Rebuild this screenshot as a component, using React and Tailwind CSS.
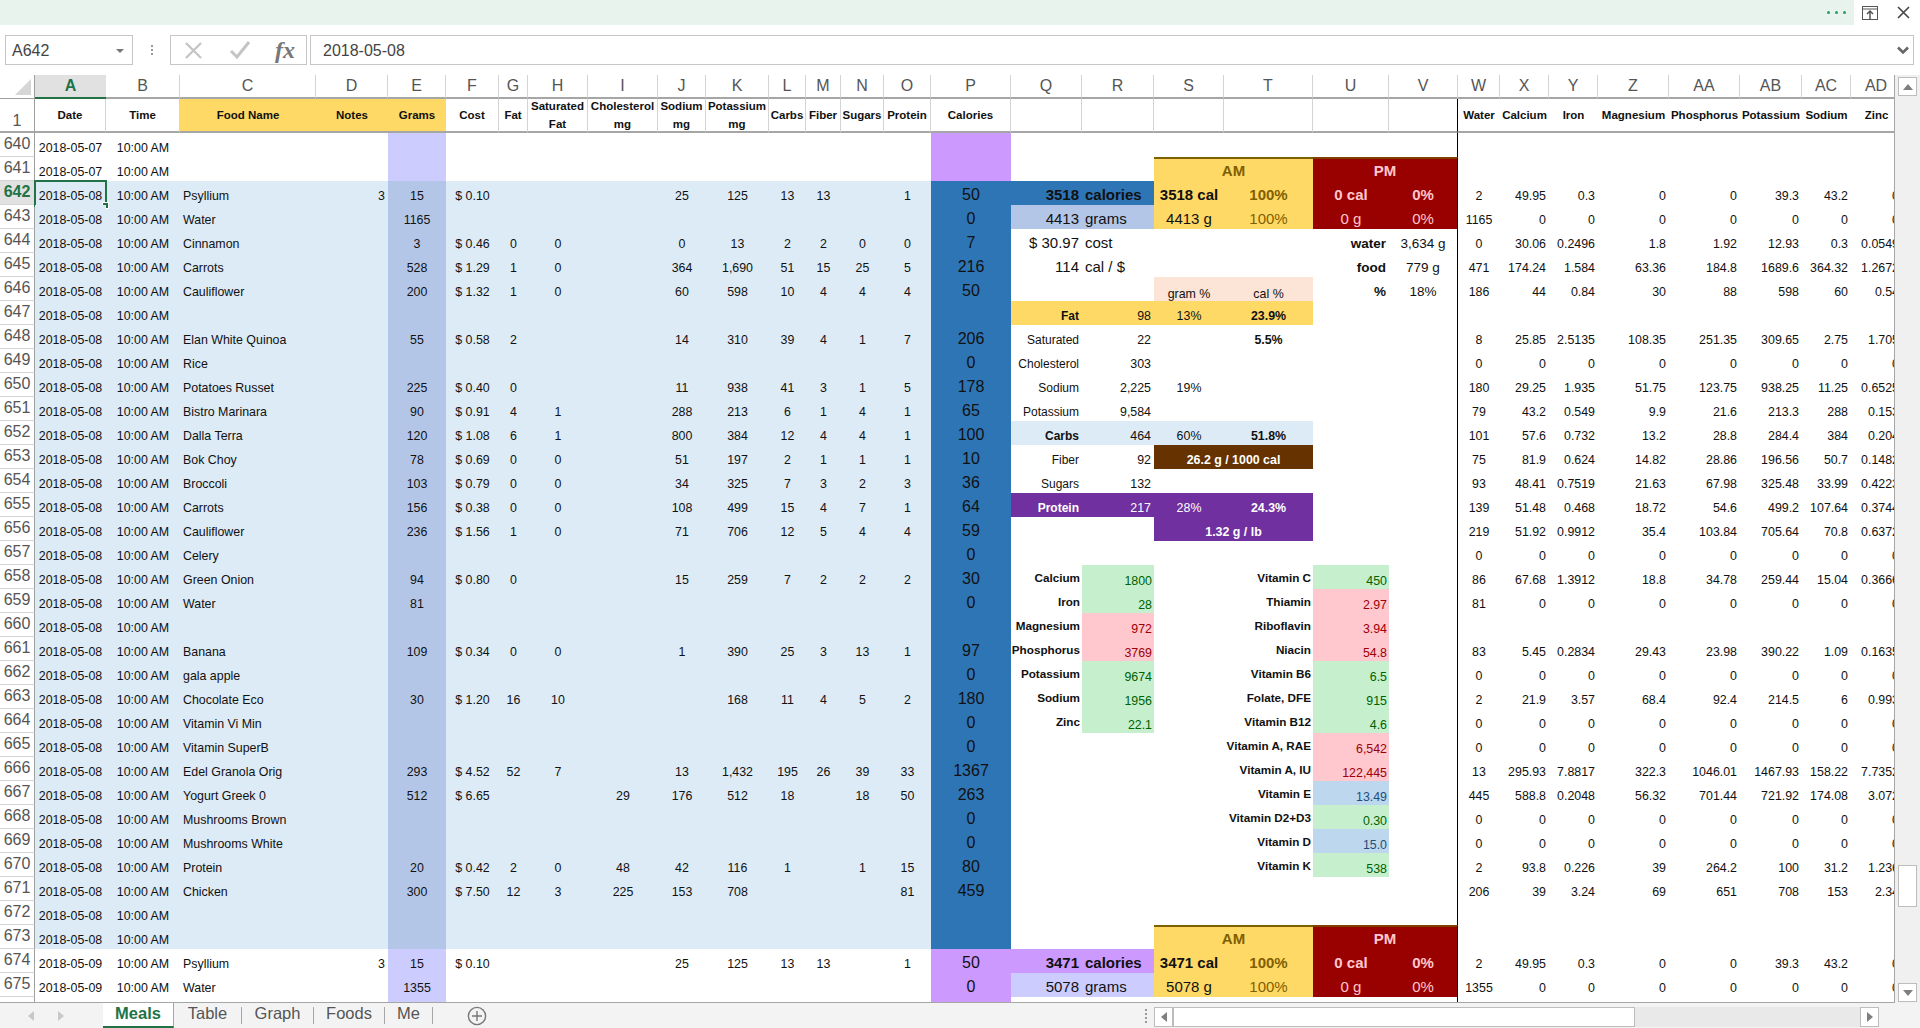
import React from "react";

const Z = [0, 0, 0, 0, 0, 0, 0, 0];
const D7 = "2018-05-07", D8 = "2018-05-08", D9 = "2018-05-09";
// num,date,name,notes,grams,cost,fat,sat,chol,sod,pot,carbs,fiber,sug,prot,cal,right
const rows = [
  [640, D7],
  [641, D7],
  [642, D8, "Psyllium", "3", "15", "$ 0.10", "", "", "", "25", "125", "13", "13", "", "1", "50", [2, 49.95, 0.3, 0, 0, 39.3, 43.2, 0]],
  [643, D8, "Water", "", "1165", "", "", "", "", "", "", "", "", "", "", "0", [1165, 0, 0, 0, 0, 0, 0, 0]],
  [644, D8, "Cinnamon", "", "3", "$ 0.46", "0", "0", "", "0", "13", "2", "2", "0", "0", "7", [0, 30.06, 0.2496, 1.8, 1.92, 12.93, 0.3, 0.0549]],
  [645, D8, "Carrots", "", "528", "$ 1.29", "1", "0", "", "364", "1,690", "51", "15", "25", "5", "216", [471, 174.24, 1.584, 63.36, 184.8, 1689.6, 364.32, 1.2672]],
  [646, D8, "Cauliflower", "", "200", "$ 1.32", "1", "0", "", "60", "598", "10", "4", "4", "4", "50", [186, 44, 0.84, 30, 88, 598, 60, 0.54]],
  [647, D8],
  [648, D8, "Elan White Quinoa", "", "55", "$ 0.58", "2", "", "", "14", "310", "39", "4", "1", "7", "206", [8, 25.85, 2.5135, 108.35, 251.35, 309.65, 2.75, 1.705]],
  [649, D8, "Rice", "", "", "", "", "", "", "", "", "", "", "", "", "0", Z],
  [650, D8, "Potatoes Russet", "", "225", "$ 0.40", "0", "", "", "11", "938", "41", "3", "1", "5", "178", [180, 29.25, 1.935, 51.75, 123.75, 938.25, 11.25, 0.6525]],
  [651, D8, "Bistro Marinara", "", "90", "$ 0.91", "4", "1", "", "288", "213", "6", "1", "4", "1", "65", [79, 43.2, 0.549, 9.9, 21.6, 213.3, 288, 0.153]],
  [652, D8, "Dalla Terra", "", "120", "$ 1.08", "6", "1", "", "800", "384", "12", "4", "4", "1", "100", [101, 57.6, 0.732, 13.2, 28.8, 284.4, 384, 0.204]],
  [653, D8, "Bok Choy", "", "78", "$ 0.69", "0", "0", "", "51", "197", "2", "1", "1", "1", "10", [75, 81.9, 0.624, 14.82, 28.86, 196.56, 50.7, 0.1482]],
  [654, D8, "Broccoli", "", "103", "$ 0.79", "0", "0", "", "34", "325", "7", "3", "2", "3", "36", [93, 48.41, 0.7519, 21.63, 67.98, 325.48, 33.99, 0.4223]],
  [655, D8, "Carrots", "", "156", "$ 0.38", "0", "0", "", "108", "499", "15", "4", "7", "1", "64", [139, 51.48, 0.468, 18.72, 54.6, 499.2, 107.64, 0.3744]],
  [656, D8, "Cauliflower", "", "236", "$ 1.56", "1", "0", "", "71", "706", "12", "5", "4", "4", "59", [219, 51.92, 0.9912, 35.4, 103.84, 705.64, 70.8, 0.6372]],
  [657, D8, "Celery", "", "", "", "", "", "", "", "", "", "", "", "", "0", Z],
  [658, D8, "Green Onion", "", "94", "$ 0.80", "0", "", "", "15", "259", "7", "2", "2", "2", "30", [86, 67.68, 1.3912, 18.8, 34.78, 259.44, 15.04, 0.3666]],
  [659, D8, "Water", "", "81", "", "", "", "", "", "", "", "", "", "", "0", [81, 0, 0, 0, 0, 0, 0, 0]],
  [660, D8],
  [661, D8, "Banana", "", "109", "$ 0.34", "0", "0", "", "1", "390", "25", "3", "13", "1", "97", [83, 5.45, 0.2834, 29.43, 23.98, 390.22, 1.09, 0.1635]],
  [662, D8, "gala apple", "", "", "", "", "", "", "", "", "", "", "", "", "0", Z],
  [663, D8, "Chocolate Eco", "", "30", "$ 1.20", "16", "10", "", "", "168", "11", "4", "5", "2", "180", [2, 21.9, 3.57, 68.4, 92.4, 214.5, 6, 0.993]],
  [664, D8, "Vitamin Vi Min", "", "", "", "", "", "", "", "", "", "", "", "", "0", Z],
  [665, D8, "Vitamin SuperB", "", "", "", "", "", "", "", "", "", "", "", "", "0", Z],
  [666, D8, "Edel Granola Orig", "", "293", "$ 4.52", "52", "7", "", "13", "1,432", "195", "26", "39", "33", "1367", [13, 295.93, 7.8817, 322.3, 1046.01, 1467.93, 158.22, 7.7352]],
  [667, D8, "Yogurt Greek 0", "", "512", "$ 6.65", "", "", "29", "176", "512", "18", "", "18", "50", "263", [445, 588.8, 0.2048, 56.32, 701.44, 721.92, 174.08, 3.072]],
  [668, D8, "Mushrooms Brown", "", "", "", "", "", "", "", "", "", "", "", "", "0", Z],
  [669, D8, "Mushrooms White", "", "", "", "", "", "", "", "", "", "", "", "", "0", Z],
  [670, D8, "Protein", "", "20", "$ 0.42", "2", "0", "48", "42", "116", "1", "", "1", "15", "80", [2, 93.8, 0.226, 39, 264.2, 100, 31.2, 1.236]],
  [671, D8, "Chicken", "", "300", "$ 7.50", "12", "3", "225", "153", "708", "", "", "", "81", "459", [206, 39, 3.24, 69, 651, 708, 153, 2.34]],
  [672, D8],
  [673, D8],
  [674, D9, "Psyllium", "3", "15", "$ 0.10", "", "", "", "25", "125", "13", "13", "", "1", "50", [2, 49.95, 0.3, 0, 0, 39.3, 43.2, 0]],
  [675, D9, "Water", "", "1355", "", "", "", "", "", "", "", "", "", "", "0", [1355, 0, 0, 0, 0, 0, 0, 0]],
  [676],
];

const cols = ["A", "B", "C", "D", "E", "F", "G", "H", "I", "J", "K", "L", "M", "N", "O", "P", "Q", "R", "S", "T", "U", "V", "W", "X", "Y", "Z", "AA", "AB", "AC", "AD"];

const base = "flex min-w-0 overflow-hidden whitespace-nowrap items-end pb-[2px] text-[12.4px] leading-[14px] text-[#111]";
const ctr = "justify-center";
const rt = "justify-end pr-[3px]";
const lf = "justify-start pl-[3px]";
const big = "items-center !pb-[1px] !text-[15px] !leading-[18px]";
const VR = "border-r border-black";

const Cell = ({ c = "", span, children }) => (
  <div className={`${base} ${c} ${span ? "col-span-2" : ""}`}>{children}</div>
);

const metrics = {
  647: ["Fat", "98", "13%", "23.9%", "bg-[#ffd966]", "font-bold", ""],
  648: ["Saturated", "22", "", "5.5%", "", "", ""],
  649: ["Cholesterol", "303", "", "", "", "", ""],
  650: ["Sodium", "2,225", "19%", "", "", "", ""],
  651: ["Potassium", "9,584", "", "", "", "", ""],
  652: ["Carbs", "464", "60%", "51.8%", "bg-[#ddebf7]", "font-bold", ""],
  654: ["Sugars", "132", "", "", "", "", ""],
};

const GR = "bg-[#c6efce] !text-[#006100]";
const RD = "bg-[#ffc7ce] !text-[#9c0006]";
const BL = "bg-[#bdd7ee] !text-[#1f4e78]";
const minerals = {
  658: ["Calcium", "1800", GR], 659: ["Iron", "28", GR], 660: ["Magnesium", "972", RD], 661: ["Phosphorus", "3769", RD],
  662: ["Potassium", "9674", GR], 663: ["Sodium", "1956", GR], 664: ["Zinc", "22.1", GR],
};
const vitamins = {
  658: ["Vitamin C", "450", GR], 659: ["Thiamin", "2.97", RD], 660: ["Riboflavin", "3.94", RD], 661: ["Niacin", "54.8", RD],
  662: ["Vitamin B6", "6.5", GR], 663: ["Folate, DFE", "915", GR], 664: ["Vitamin B12", "4.6", GR], 665: ["Vitamin A, RAE", "6,542", RD],
  666: ["Vitamin A, IU", "122,445", RD], 667: ["Vitamin E", "13.49", BL], 668: ["Vitamin D2+D3", "0.30", GR], 669: ["Vitamin D", "15.0", BL], 670: ["Vitamin K", "538", GR],
};

function amPm() {
  return [
    <Cell key="q" />,
    <Cell key="r" />,
    <Cell key="s" span c={`${ctr} ${big} bg-[#ffd966] border-t-2 border-[#7f6000] font-bold !text-[#7f6000]`}>AM</Cell>,
    <Cell key="u" span c={`${ctr} ${big} bg-[#990000] border-t-2 border-t-[#7f3f00] font-bold !text-[#ffc7ce] ${VR}`}>PM</Cell>,
  ];
}

function Summary({ cal, g, calBg, gBg }) {
  return {
    top: [
      <Cell key="q" c={`${rt} ${big} ${calBg} font-bold`}>{cal}</Cell>,
      <Cell key="r" c={`${lf} ${big} ${calBg} font-bold`}>calories</Cell>,
      <Cell key="s" c={`${ctr} ${big} bg-[#ffd966] font-bold`}>{cal} cal</Cell>,
      <Cell key="t" c={`${ctr} ${big} bg-[#ffd966] font-bold !text-[#7f6000]`}>100%</Cell>,
      <Cell key="u" c={`${ctr} ${big} bg-[#990000] font-bold !text-[#ffc7ce]`}>0 cal</Cell>,
      <Cell key="v" c={`${ctr} ${big} bg-[#990000] font-bold !text-[#ffc7ce] ${VR}`}>0%</Cell>,
    ],
    bot: [
      <Cell key="q" c={`${rt} ${big} ${gBg}`}>{g}</Cell>,
      <Cell key="r" c={`${lf} ${big} ${gBg}`}>grams</Cell>,
      <Cell key="s" c={`${ctr} ${big} bg-[#ffd966]`}>{g} g</Cell>,
      <Cell key="t" c={`${ctr} ${big} bg-[#ffd966] !text-[#7f6000]`}>100%</Cell>,
      <Cell key="u" c={`${ctr} ${big} bg-[#990000] !text-[#ffc7ce]`}>0 g</Cell>,
      <Cell key="v" c={`${ctr} ${big} bg-[#990000] !text-[#ffc7ce] ${VR}`}>0%</Cell>,
    ],
  };
}

function Panel(n) {
  const a = Summary({ cal: "3518", g: "4413", calBg: "bg-[#2e75b6]", gBg: "bg-[#b4c6e7]" });
  const b = Summary({ cal: "3471", g: "5078", calBg: "bg-[#cc99ff]", gBg: "bg-[#ccccff]" });
  if (n === 641 || n === 673) return amPm();
  if (n === 642) return a.top;
  if (n === 643) return a.bot;
  if (n === 674) return b.top;
  if (n === 675) return b.bot;
  if (n === 644 || n === 645 || n === 646) {
    const q = n === 644 ? ["$ 30.97", "cost", "water", "3,634 g"] : n === 645 ? ["114", "cal / $", "food", "779 g"] : ["", "", "%", "18%"];
    return [
      <Cell key="q" c={`${rt} ${big}`}>{q[0]}</Cell>,
      <Cell key="r" c={`${lf} ${big}`}>{q[1]}</Cell>,
      <Cell key="s" c={`${ctr} ${n === 646 ? "bg-[#fce4d6] items-center !pb-0" : ""}`}>{n === 646 ? "gram %" : ""}</Cell>,
      <Cell key="t" c={`${ctr} ${n === 646 ? "bg-[#fce4d6] items-center !pb-0" : ""}`}>{n === 646 ? "cal %" : ""}</Cell>,
      <Cell key="u" c={`${rt} items-center !pb-0 font-bold !text-[13.5px] !leading-[18px]`}>{q[2]}</Cell>,
      <Cell key="v" c={`${ctr} items-center !pb-0 !text-[13.5px] !leading-[18px] ${VR}`}>{q[3]}</Cell>,
    ];
  }
  if (metrics[n]) {
    const [l, v, g, p, bg, bold] = metrics[n];
    return [
      <Cell key="q" c={`${rt} ${bg} ${bold} !text-[12px]`}>{l}</Cell>,
      <Cell key="r" c={`${rt} ${bg}`}>{v}</Cell>,
      <Cell key="s" c={`${ctr} ${bg}`}>{g}</Cell>,
      <Cell key="t" c={`${ctr} ${bg} font-bold`}>{p}</Cell>,
      <Cell key="u" />,
      <Cell key="v" c={VR} />,
    ];
  }
  if (n === 653) {
    return [
      <Cell key="q" c={`${rt} !text-[12px]`}>Fiber</Cell>,
      <Cell key="r" c={rt}>92</Cell>,
      <Cell key="s" span c={`${ctr} bg-[#663300] font-bold !text-white`}>26.2 g / 1000 cal</Cell>,
      <Cell key="u" />,
      <Cell key="v" c={VR} />,
    ];
  }
  if (n === 655) {
    const p = "bg-[#7030a0] font-bold !text-white";
    return [
      <Cell key="q" c={`${rt} ${p} !text-[12px]`}>Protein</Cell>,
      <Cell key="r" c={`${rt} bg-[#7030a0] !text-white`}>217</Cell>,
      <Cell key="s" c={`${ctr} bg-[#7030a0] !text-white`}>28%</Cell>,
      <Cell key="t" c={`${ctr} ${p}`}>24.3%</Cell>,
      <Cell key="u" />,
      <Cell key="v" c={VR} />,
    ];
  }
  if (n === 656) {
    return [
      <Cell key="q" />,
      <Cell key="r" />,
      <Cell key="s" span c={`${ctr} bg-[#7030a0] font-bold !text-white`}>1.32 g / lb</Cell>,
      <Cell key="u" />,
      <Cell key="v" c={VR} />,
    ];
  }
  if (minerals[n] || vitamins[n]) {
    const m = minerals[n], v = vitamins[n];
    const num = "justify-end pr-[2px] !pb-[1px]";
    const lab = "justify-end pr-[2px] !pb-[4px] font-bold !text-[11.7px]";
    return [
      <Cell key="q" c={lab}>{m ? m[0] : ""}</Cell>,
      <Cell key="r" c={m ? `${num} ${m[2]}` : ""}>{m ? m[1] : ""}</Cell>,
      <Cell key="s" />,
      <Cell key="t" c={lab}>{v ? v[0] : ""}</Cell>,
      <Cell key="u" c={v ? `${num} ${v[2]}` : ""}>{v ? v[1] : ""}</Cell>,
      <Cell key="v" c={VR} />,
    ];
  }
  return [
    <Cell key="q" />, <Cell key="r" />, <Cell key="s" />, <Cell key="t" />, <Cell key="u" />, <Cell key="v" c={VR} />,
  ];
}

function DataRow({ r }) {
  const [n, date, name = "", notes = "", grams = "", cost = "", fat = "", sat = "", chol = "", sod = "", pot = "", carb = "", fib = "", sug = "", prot = "", cal = "", right] = r;
  const blue = n >= 642 && n <= 673;
  const sel = n === 642;
  const bg = blue ? "bg-[#ddebf7]" : "";
  const eBg = blue ? "bg-[#b4c6e7]" : "bg-[#ccccff]";
  const pBg = blue ? "bg-[#2e75b6]" : "bg-[#cc99ff]";
  const mid = [fat, sat, chol, sod, pot, carb, fib, sug, prot];
  return (
    <>
      <div className={`flex items-center justify-center border-r border-b border-r-[#9f9f9f] border-b-[#d4d4d4] pb-[1px] text-[16px] leading-[18px] ${sel ? "bg-[#e1e1e1] font-bold text-[#217346]" : "text-[#555]"}`}>{n === 676 ? "" : n}</div>
      <div className={`relative ${base} ${ctr} ${bg} !overflow-visible`}>
        {date}
        {sel && (
          <span className="absolute -left-[1px] -top-[1px] -right-[1px] -bottom-[2px] border-2 border-[#217346]">
            <span className="absolute -right-[3px] -bottom-[3px] h-[5px] w-[5px] bg-[#217346] outline outline-1 outline-white" />
          </span>
        )}
      </div>
      <Cell c={`${ctr} ${bg}`}>{date ? "10:00 AM" : ""}</Cell>
      <Cell c={`${lf} ${bg}`}>{name}</Cell>
      <Cell c={`${rt} ${bg}`}>{notes}</Cell>
      <Cell c={`${ctr} ${eBg}`}>{grams}</Cell>
      <Cell c={`${ctr} ${bg}`}>{cost}</Cell>
      {mid.map((v, i) => (
        <Cell key={i} c={`${ctr} ${bg}`}>{v}</Cell>
      ))}
      <Cell c={`${ctr} ${pBg} items-center !pb-[1px] !text-[16px] !leading-[18px]`}>{cal}</Cell>
      {Panel(n)}
      {right
        ? right.map((v, i) => <Cell key={i} c={i === 0 ? ctr : rt}>{v}</Cell>)
        : [0, 1, 2, 3, 4, 5, 6, 7].map((i) => <Cell key={i} />)}
    </>
  );
}

const headers = [
  ["Date", ""], ["Time", ""], ["Food Name", "y"], ["Notes", "y"], ["Grams", "y"], ["Cost", ""], ["Fat", ""], ["Saturated Fat", ""], ["Cholesterol mg", ""], ["Sodium mg", ""], ["Potassium mg", ""], ["Carbs", ""], ["Fiber", ""], ["Sugars", ""], ["Protein", ""], ["Calories", ""], ["", ""], ["", ""], ["", ""], ["", ""], ["", ""], ["", "v"],
  ["Water", "n"], ["Calcium", "n"], ["Iron", "n"], ["Magnesium", "n"], ["Phosphorus", "n"], ["Potassium", "n"], ["Sodium", "n"], ["Zinc", "n"],
];

function Sheet() {
  return (
    <div className="min-w-0 flex-1 overflow-hidden border-r border-b border-[#a6a6a6]">
      <div className="grid w-[1902px] grid-cols-[35px_71px_74px_136px_72px_58px_53px_29px_60px_70px_48px_63px_37px_35px_43px_47px_80px_71px_72px_70px_89px_76px_69px_42px_49px_49px_71px_71px_62px_49px_51px] grid-rows-[24px_34px] auto-rows-[24px]">
        <div className="flex items-end justify-end border-r border-b border-[#9f9f9f] pr-[3px] pb-[3px]">
          <svg width="16" height="16" viewBox="0 0 16 16"><path d="M16 0V16H0Z" fill="#d6d6d6" /></svg>
        </div>
        {cols.map((c, i) => (
          <div
            key={c}
            className={`flex items-center justify-center border-b-2 text-[16px] leading-[18px] ${i === 0 ? "border-b-[#217346] bg-[#e1e1e1] font-bold text-[#217346]" : "border-r border-r-[#d4d4d4] border-b-[#a6a6a6] text-[#555]"}`}
          >
            {c}
          </div>
        ))}
        <div className="flex items-end justify-center border-r border-b-2 border-r-[#9f9f9f] border-b-[#a6a6a6] pb-[1px] text-[16px] leading-[18px] text-[#555]">1</div>
        {headers.map(([t, k], i) => (
          <div
            key={i}
            className={`flex items-center justify-center overflow-hidden border-b-2 border-b-[#a6a6a6] text-center text-[11.5px] leading-[18px] font-bold text-[#111] ${k === "y" ? "bg-[#ffd966]" : k === "v" ? "border-r border-r-black" : k === "n" ? "" : "border-r border-r-[#d4d4d4]"}`}
          >
            <span className={t.includes(" ") && k !== "y" ? "w-min" : "whitespace-nowrap"}>{t}</span>
          </div>
        ))}
        {rows.map((r) => (
          <DataRow key={r[0]} r={r} />
        ))}
      </div>
    </div>
  );
}

function VScroll() {
  return (
    <div className="flex w-[25px] shrink-0 flex-col bg-[#f0f0f0] pt-[2px] pr-[3px] pb-[1px] pl-[3px]">
      <div className="flex h-[19px] shrink-0 items-center justify-center border border-[#bdbdbd] bg-white">
        <svg width="10" height="6" viewBox="0 0 10 6"><path d="M5 0L10 6H0Z" fill="#7f7f7f" /></svg>
      </div>
      <div className="flex flex-1 flex-col">
        <div className="h-[769px] shrink-0" />
        <div className="h-[42px] shrink-0 border border-[#bdbdbd] bg-white" />
      </div>
      <div className="flex h-[19px] shrink-0 items-center justify-center border border-[#bdbdbd] bg-white">
        <svg width="10" height="6" viewBox="0 0 10 6"><path d="M5 6L10 0H0Z" fill="#7f7f7f" /></svg>
      </div>
    </div>
  );
}

const Tab = ({ w, children }) => (
  <div className={`flex shrink-0 ${w}`}>
    <div className="flex flex-1 items-center justify-center pb-[5px] text-[16.5px] leading-[20px] text-[#555]">{children}</div>
    <span className="my-[4px] w-px bg-[#a6a6a6]" />
  </div>
);

function TabBar() {
  return (
    <div className="flex h-[25px] shrink-0 bg-[#f3f3f3]">
      <div className="flex w-[103px] shrink-0 items-center gap-[24px] pl-[28px]">
        <svg width="6" height="10" viewBox="0 0 6 10"><path d="M6 0V10L0 5Z" fill="#c8c8c8" /></svg>
        <svg width="6" height="10" viewBox="0 0 6 10"><path d="M0 0V10L6 5Z" fill="#c8c8c8" /></svg>
      </div>
      <div className="flex w-[71px] shrink-0 items-center justify-center border-r border-b-2 border-r-[#a6a6a6] border-b-[#217346] bg-white pb-[3px] text-[16.5px] leading-[20px] font-bold text-[#217346]">Meals</div>
      <Tab w="w-[68px]">Table</Tab>
      <Tab w="w-[72px]">Graph</Tab>
      <Tab w="w-[71px]">Foods</Tab>
      <Tab w="w-[48px]">Me</Tab>
      <div className="flex w-[88px] shrink-0 items-center justify-center">
        <svg width="20" height="20" viewBox="0 0 20 20" fill="none" stroke="#777" strokeWidth="1.4"><circle cx="10" cy="10" r="8.6" /><path d="M10 5v10M5 10h10" /></svg>
      </div>
      <div className="w-[617px] shrink-0" />
      <div className="flex w-[16px] shrink-0 flex-col items-center justify-center gap-[2px]">
        <span className="h-[2px] w-[2px] bg-[#999]" /><span className="h-[2px] w-[2px] bg-[#999]" /><span className="h-[2px] w-[2px] bg-[#999]" /><span className="h-[2px] w-[2px] bg-[#999]" />
      </div>
      <div className="mt-[4px] flex h-[20px] w-[725px] shrink-0 bg-[#e9e9e9]">
        <div className="flex w-[19px] items-center justify-center border border-[#bdbdbd] bg-white">
          <svg width="6" height="10" viewBox="0 0 6 10"><path d="M6 0V10L0 5Z" fill="#7f7f7f" /></svg>
        </div>
        <div className="w-[462px] border border-[#bdbdbd] bg-white" />
        <div className="flex-1" />
        <div className="flex w-[19px] items-center justify-center border border-[#bdbdbd] bg-white">
          <svg width="6" height="10" viewBox="0 0 6 10"><path d="M0 0V10L6 5Z" fill="#7f7f7f" /></svg>
        </div>
      </div>
    </div>
  );
}

function TopBar() {
  return (
    <div className="flex h-[25px] shrink-0">
      <div className="flex flex-1 items-center justify-end gap-[5px] bg-[#e9f3ee] pr-[8px]">
        <span className="h-[3px] w-[3px] rounded-full bg-[#2a9d5c]" />
        <span className="h-[3px] w-[3px] rounded-full bg-[#2a9d5c]" />
        <span className="h-[3px] w-[3px] rounded-full bg-[#2a9d5c]" />
      </div>
      <div className="flex w-[66px] shrink-0 items-center gap-[19px] bg-white pl-[8px]">
        <svg width="16" height="14" viewBox="0 0 16 14" fill="none" stroke="#555"><rect x="0.5" y="0.5" width="15" height="13" /><path d="M0 3h16" /><path d="M8 13V5M5 8l3-3 3 3" strokeWidth="1.5" /></svg>
        <svg width="13" height="13" viewBox="0 0 13 13" fill="none" stroke="#444" strokeWidth="1.6"><path d="M1 1l11 11M12 1L1 12" /></svg>
      </div>
    </div>
  );
}

function FormulaBar() {
  return (
    <div className="flex h-[50px] shrink-0 items-start pt-[10px] pl-[5px] pr-[6px]">
      <div className="flex h-[30px] w-[128px] shrink-0 items-center justify-between border border-[#c6c6c6] pt-[1px] pr-[8px] pl-[6px] text-[16px] text-[#444]">
        A642
        <svg width="8" height="4" viewBox="0 0 8 4"><path d="M0 0H8L4 4Z" fill="#777" /></svg>
      </div>
      <div className="flex h-[30px] w-[37px] shrink-0 flex-col items-center justify-center gap-[2px]">
        <span className="h-[2px] w-[2px] bg-[#999]" /><span className="h-[2px] w-[2px] bg-[#999]" /><span className="h-[2px] w-[2px] bg-[#999]" />
      </div>
      <div className="flex h-[30px] w-[137px] shrink-0 items-center border border-[#c6c6c6] pl-[14px]">
        <svg width="17" height="17" viewBox="0 0 18 18" fill="none" stroke="#c4c4c4" strokeWidth="2.4"><path d="M1 1l16 16M17 1L1 17" /></svg>
        <svg className="ml-[28px]" width="20" height="18" viewBox="0 0 20 18" fill="none" stroke="#c4c4c4" strokeWidth="3"><path d="M1 10l6 6L19 1" /></svg>
        <span className="ml-[25px] font-['Liberation_Serif',serif] text-[24px] leading-[24px] font-bold text-[#777] italic">fx</span>
      </div>
      <div className="ml-[3px] flex h-[30px] flex-1 items-center justify-between border border-[#c6c6c6] pt-[1px] pr-[4px] pl-[12px] text-[16px] text-[#444]">
        2018-05-08
        <svg width="12" height="9" viewBox="0 0 12 9" fill="none" stroke="#666" strokeWidth="2.6"><path d="M1 1.5l5 5 5-5" /></svg>
      </div>
    </div>
  );
}

export default function App() {
  return (
    <div className="flex h-[1028px] w-[1920px] flex-col overflow-hidden bg-white font-['Liberation_Sans',sans-serif]">
      <TopBar />
      <FormulaBar />
      <div className="flex min-h-0 flex-1">
        <Sheet />
        <VScroll />
      </div>
      <TabBar />
    </div>
  );
}
